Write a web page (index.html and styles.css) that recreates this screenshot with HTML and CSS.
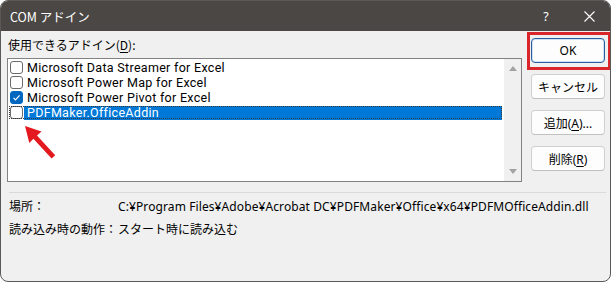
FILE: index.html
```html
<!DOCTYPE html>
<html lang="ja">
<head>
<meta charset="utf-8">
<link rel="stylesheet" href="styles.css">
</head>
<body>
<div class="window">
  <div class="titlebar">
    <span class="title">COM アドイン</span>
    <span class="help">?</span>
    <span class="close"><svg width="11" height="11" viewBox="0 0 11 11"><path d="M0.5 0.5 L10.5 10.5 M10.5 0.5 L0.5 10.5" stroke="#fff" stroke-width="1.1" fill="none"/></svg></span>
  </div>
  <div class="content">
    <div class="main">
      <div class="left">
        <div class="label">使用できるアドイン(<u>D</u>):</div>
        <div class="listbox">
          <div class="items">
            <div class="row"><span class="cb"></span><span class="txt">Microsoft Data Streamer for Excel</span></div>
            <div class="row"><span class="cb"></span><span class="txt">Microsoft Power Map for Excel</span></div>
            <div class="row"><span class="cb checked"><svg width="11" height="11" viewBox="0 0 11 11"><path d="M2.5 5.8 L4.5 7.8 L8.6 3.4" stroke="#fff" stroke-width="1.2" fill="none"/></svg></span><span class="txt">Microsoft Power Pivot for Excel</span></div>
            <div class="row selected"><span class="cb"></span><span class="txt">PDFMaker.OfficeAddin</span></div>
          </div>
          <div class="scrollbar">
            <span class="arrow up"></span>
            <span class="arrow down"></span>
          </div>
        </div>
      </div>
      <div class="buttons">
        <button class="btn default">OK</button>
        <button class="btn">キャンセル</button>
        <button class="btn">追加(<u>A</u>)...</button>
        <button class="btn">削除(<u>R</u>)</button>
      </div>
    </div>
    <div class="sep"></div>
    <div class="info">
      <span class="k">場所：</span><span class="v path">C:¥Program Files¥Adobe¥Acrobat DC¥PDFMaker¥Office¥x64¥PDFMOfficeAddin.dll</span>
      <span class="k">読み込み時の動作：</span><span class="v">スタート時に読み込む</span>
    </div>
  </div>
  <div class="highlight"></div>
  <svg class="pointer" width="45" height="45" viewBox="0 0 45 45"><polygon points="10,6 26.5,11.5 22,15.5 40.2,35.2 36.6,38.6 18.4,18.8 14.3,23" fill="#e3191f"/></svg>
</div>
</body>
</html>
```
FILE: styles.css
```css
html, body {
  margin: 0;
  padding: 0;
  background: #ffffff;
}
body {
  font-family: "Noto Sans", "Noto Sans CJK JP", sans-serif;
  font-size: 12px;
  color: #000;
}
.window {
  position: relative;
  width: 611px;
  height: 282px;
  box-sizing: border-box;
  border: 1px solid #5b5957;
  border-radius: 8px;
  overflow: hidden;
  background: #f0f0f0;
}
.titlebar {
  height: 30px;
  background: #4a4745;
  color: #fff;
  display: flex;
  align-items: center;
  font-family: "Noto Sans CJK JP", sans-serif;
  font-size: 12.5px;
}
.title {
  margin-left: 9px;
  flex: 1;
}
.help {
  width: 14px;
  text-align: center;
  font-family: "Noto Sans", sans-serif;
  font-size: 12.5px;
}
.close {
  margin-left: 31px;
  margin-right: 15px;
  display: flex;
  align-items: center;
}
.content {
  padding: 0 0 0 6px;
}
.main {
  display: flex;
}
.left {
  width: 515px;
}
.label {
  margin-top: 6px;
  margin-bottom: 5px;
  line-height: 16px;
  padding-left: 1px;
  font-family: "Noto Sans CJK JP", sans-serif;
}
.label u, .btn u {
  text-underline-offset: 2px;
}
.listbox {
  height: 124px;
  box-sizing: border-box;
  border: 1px solid #828282;
  background: #fff;
  display: flex;
}
.items {
  flex: 1;
  padding-top: 1px;
}
.row {
  height: 15px;
  display: flex;
  align-items: center;
  padding-left: 2px;
  box-sizing: border-box;
}
.cb {
  width: 13px;
  height: 13px;
  box-sizing: border-box;
  border: 1px solid #6b6b6b;
  border-radius: 3px;
  background: #fff;
  display: flex;
  align-items: center;
  justify-content: center;
  flex: none;
}
.cb.checked {
  background: #0067c0;
  border-color: #0067c0;
}
.txt {
  margin-left: 1px;
  padding-left: 3px;
  line-height: 14px;
  height: 14px;
  white-space: nowrap;
  font-family: Roboto, "Noto Sans", sans-serif;
  font-size: 12.5px;
  letter-spacing: 0.3px;
}
.row.selected {
  outline: 1px dotted #3a3a3a;
  outline-offset: -2px;
  margin-right: 1px;
}
.row.selected .txt {
  flex: 1;
  background: #0078d7;
  color: #fff;
  margin-right: 1px;
}
.scrollbar {
  width: 17px;
  background: #f0f0f0;
  display: flex;
  flex-direction: column;
  justify-content: space-between;
  align-items: center;
  padding: 7px 0 7px;
}
.arrow {
  width: 0;
  height: 0;
  border-left: 4px solid transparent;
  border-right: 4px solid transparent;
}
.arrow.up {
  border-bottom: 5px solid #a3a3a3;
}
.arrow.down {
  border-top: 5px solid #a3a3a3;
}
.buttons {
  margin-left: 9px;
  padding-top: 7px;
  display: flex;
  flex-direction: column;
  gap: 11px;
}
.btn {
  width: 74px;
  height: 25px;
  box-sizing: border-box;
  border: 1px solid #d0d0d0;
  border-bottom-color: #c0c0c0;
  border-radius: 4px;
  background: #fdfdfd;
  font-family: "Noto Sans", "Noto Sans CJK JP", sans-serif;
  font-size: 12px;
  color: #000;
  padding: 0;
}
.btn.default {
  border: 1px solid #2a5f9e;
  box-shadow: inset 0 0 0 1px #cfe0f5;
}
.sep {
  margin: 10px 4px 0 2px;
  height: 1px;
  background: #dadada;
}
.info {
  margin-top: 3px;
  margin-left: 2px;
  display: grid;
  grid-template-columns: 109px auto;
  grid-auto-rows: 20px;
  row-gap: 3px;
  align-items: center;
  font-family: "Noto Sans", "Noto Sans CJK JP", sans-serif;
}
.k, .v {
  white-space: nowrap;
}
.path {
  letter-spacing: 0.1px;
}
.highlight {
  position: absolute;
  left: 526px;
  top: 31px;
  width: 84px;
  height: 38px;
  box-sizing: border-box;
  border: 3px solid #d9262a;
}
.pointer {
  position: absolute;
  left: 14px;
  top: 119px;
}
```
